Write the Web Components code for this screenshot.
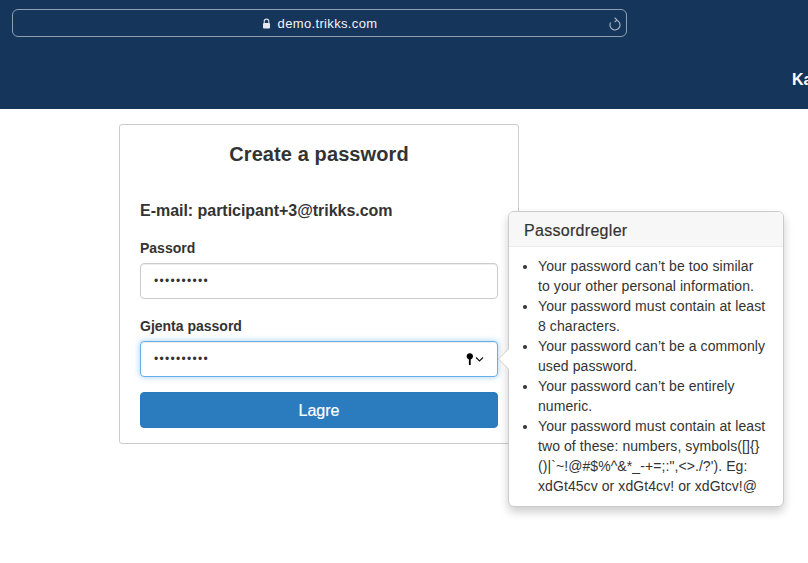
<!DOCTYPE html>
<html lang="en">
<head>
<meta charset="utf-8">
<title>Create a password</title>
<style>
    html, body { margin: 0; background: #fff; }
    body {
        font-family: "Liberation Sans", Arial, sans-serif;
        color: #333;
        height: 563px;
        overflow: hidden;
    }
</style>
</head>
<body>

<trk-header url="demo.trikks.com" nav="Ka"></trk-header>

<trk-page>
    <trk-card heading="Create a password">
        <trk-email>E-mail: participant+3@trikks.com</trk-email>
        <trk-field label="Passord">••••••••••</trk-field>
        <trk-field label="Gjenta passord" focused>••••••••••</trk-field>
        <trk-button>Lagre</trk-button>
        <trk-popover slot="popover" heading="Passordregler">
            <li>Your password can’t be too similar to your other personal information.</li>
            <li>Your password must contain at least 8 characters.</li>
            <li>Your password can’t be a commonly used password.</li>
            <li>Your password can’t be entirely numeric.</li>
            <li>Your password must contain at least two of these: numbers, symbols([]{}()|`~!@#$%^&amp;*_-+=;:",&lt;&gt;./?'). Eg: xdGt45cv or xdGt4cv! or xdGtcv!@</li>
        </trk-popover>
    </trk-card>
</trk-page>

<script>
'use strict'

// small helper, every element below just clones its own template
function tpl(html) {
    const t = document.createElement('template')
    t.innerHTML = html
    return t
}

class TrkElement extends HTMLElement {
    constructor() {
        super()
        this.attachShadow({mode: 'open'})
        this.shadowRoot.appendChild(this.constructor.template.content.cloneNode(true))
    }
}

class TrkHeader extends TrkElement {
    static template = tpl(/*html*/`
    <style>
        :host {
            display: block;
            height: 109px;
            box-sizing: border-box;
            padding: 9px 0 0 12px;
            background: #16355a;
            color: #fff;
            overflow: hidden;
        }
        .bar {
            width: 615px;
            height: 28px;
            box-sizing: border-box;
            border: 1px solid #8f9fb3;
            border-radius: 6px;
            display: grid;
            grid-template-columns: 1fr auto 1fr;
            align-items: center;
            font-size: 13px;
            color: #f2f4f7;
        }
        .url {
            display: flex;
            align-items: center;
            gap: 7px;
            letter-spacing: .35px;
        }
        .reload {
            justify-self: end;
            margin-right: 5px;
            display: block;
        }
        nav {
            margin: 33px 0 0 780px;
            font-size: 16px;
            font-weight: bold;
            line-height: 20px;
            white-space: nowrap;
        }
    </style>
    <div class="bar">
        <span></span>
        <span class="url">
            <svg width="9" height="11" viewBox="0 0 9 11">
                <path d="M2.2 5V3.4a2.3 2.3 0 0 1 4.6 0V5" fill="none" stroke="#d5dbe3" stroke-width="1.1"/>
                <rect x="1" y="5" width="7" height="5.4" rx="1" fill="#e6e9ee"/>
            </svg>
            <span id="url"></span>
        </span>
        <svg class="reload" width="12" height="18" viewBox="0 0 12 18">
            <path d="M7.5 6.2a5 5 0 1 1-5.9 2.4" fill="none" stroke="#a9b5c4" stroke-width="1.1"/>
            <path d="M5.6 3.6 8 6 5.6 8.2" fill="none" stroke="#a9b5c4" stroke-width="1.1"/>
        </svg>
    </div>
    <nav id="nav"></nav>
    `)

    connectedCallback() {
        this.shadowRoot.getElementById('url').textContent = this.getAttribute('url')
        this.shadowRoot.getElementById('nav').textContent = this.getAttribute('nav')
    }
}

class TrkPage extends TrkElement {
    static template = tpl(/*html*/`
    <style>
        :host {
            display: block;
            padding: 15px 0 0 119px;
        }
    </style>
    <slot></slot>
    `)
}

class TrkCard extends TrkElement {
    static template = tpl(/*html*/`
    <style>
        :host {
            display: block;
            position: relative;
            width: 400px;
            height: 320px;
            box-sizing: border-box;
            padding: 18px 20px 0;
            border: 1px solid #ccc;
            border-radius: 3px;
            background: #fff;
        }
        h2 {
            margin: 0 0 37px;
            font-size: 20px;
            line-height: 22px;
            font-weight: bold;
            letter-spacing: .1px;
            text-align: center;
            color: #333;
        }
    </style>
    <h2 id="heading"></h2>
    <slot></slot>
    <slot name="popover"></slot>
    `)

    connectedCallback() {
        this.shadowRoot.getElementById('heading').textContent = this.getAttribute('heading')
    }
}

class TrkEmail extends TrkElement {
    static template = tpl(/*html*/`
    <style>
        :host {
            display: block;
            margin-bottom: 18px;
            font-size: 16px;
            line-height: 18px;
            font-weight: bold;
            letter-spacing: -.03px;
        }
    </style>
    <slot></slot>
    `)
}

class TrkField extends TrkElement {
    static template = tpl(/*html*/`
    <style>
        :host {
            display: block;
            margin-bottom: 15px;
        }
        :host(:not([focused])) { margin-bottom: 17px; }
        label {
            display: block;
            margin-bottom: 5px;
            font-size: 14px;
            line-height: 20px;
            font-weight: bold;
        }
        .input {
            height: 36px;
            box-sizing: border-box;
            padding: 0 12px 0 13px;
            border: 1px solid #ccc;
            border-radius: 4px;
            box-shadow: inset 0 1px 1px rgba(0,0,0,.075);
            display: flex;
            align-items: center;
            justify-content: space-between;
            background: #fff;
        }
        .dots {
            font-size: 12px;
            letter-spacing: 1.3px;
            color: #333;
        }
        .keys { display: none; }
        :host([focused]) .input {
            border-color: #66afe9;
            box-shadow: inset 0 1px 1px rgba(0,0,0,.075), 0 0 6px rgba(102,175,233,.6);
        }
        :host([focused]) .keys { display: block; }
    </style>
    <label id="label"></label>
    <div class="input">
        <span class="dots"><slot></slot></span>
        <svg class="keys" width="20" height="14" viewBox="0 0 20 14">
            <circle cx="4.8" cy="4.3" r="3.1" fill="#000"/>
            <rect x="3.9" y="6" width="1.8" height="7" fill="#000"/>
            <path d="M11 5.5 14.5 9 18 5.5" fill="none" stroke="#111" stroke-width="1.1"/>
        </svg>
    </div>
    `)

    connectedCallback() {
        this.shadowRoot.getElementById('label').textContent = this.getAttribute('label')
    }
}

class TrkButton extends TrkElement {
    static template = tpl(/*html*/`
    <style>
        :host { display: block; }
        button {
            display: block;
            width: 100%;
            height: 36px;
            padding: 2px 0 0;
            border: 1px solid #2a78bd;
            border-radius: 4px;
            background: #2b7bbf;
            color: #fff;
            font: 16px "Liberation Sans", Arial, sans-serif;
            -webkit-text-stroke: .2px #fff;
            cursor: pointer;
        }
    </style>
    <button><slot></slot></button>
    `)
}

class TrkPopover extends TrkElement {
    static template = tpl(/*html*/`
    <style>
        :host {
            position: absolute;
            left: 388px;
            top: 86px;
            width: 276px;
            box-sizing: border-box;
            border: 1px solid #ccc;
            border-radius: 6px;
            background: #fff;
            box-shadow: 0 5px 10px rgba(0,0,0,.2);
            font-size: 14px;
            line-height: 20px;
            letter-spacing: .08px;
            color: #333;
        }
        h3 {
            margin: 0;
            padding: 9px 15px 7px;
            height: 35px;
            box-sizing: border-box;
            font-size: 16px;
            line-height: 19px;
            font-weight: normal;
            letter-spacing: .3px;
            -webkit-text-stroke: .2px #333;
            background: #f7f7f7;
            border-bottom: 1px solid #ebebeb;
            border-radius: 5px 5px 0 0;
        }
        ul {
            margin: 0;
            padding: 9px 16px 10px 29px;
        }
        .arrow {
            position: absolute;
            left: -11px;
            top: 136px;
            width: 0;
            height: 0;
            border: 11px solid transparent;
            border-left-width: 0;
            border-right-color: #ccc;
        }
        .arrow::after {
            content: "";
            position: absolute;
            left: 1px;
            top: -10px;
            border: 10px solid transparent;
            border-left-width: 0;
            border-right-color: #fff;
        }
    </style>
    <div class="arrow"></div>
    <h3 id="heading"></h3>
    <ul><slot></slot></ul>
    `)

    connectedCallback() {
        this.shadowRoot.getElementById('heading').textContent = this.getAttribute('heading')
    }
}

customElements.define('trk-header', TrkHeader)
customElements.define('trk-page', TrkPage)
customElements.define('trk-card', TrkCard)
customElements.define('trk-email', TrkEmail)
customElements.define('trk-field', TrkField)
customElements.define('trk-button', TrkButton)
customElements.define('trk-popover', TrkPopover)
</script>
</body>
</html>
